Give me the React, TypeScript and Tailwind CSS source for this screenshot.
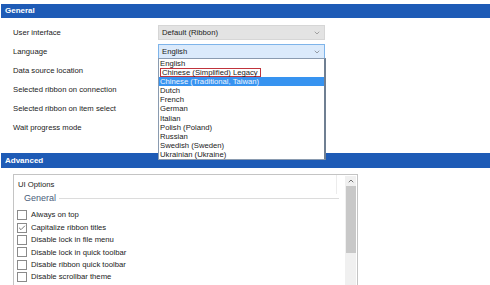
import { ChevronDown, ChevronUp, Check } from "lucide-react";

const font = { fontFamily: '"Liberation Sans", Arial, sans-serif' };

export default function App() {
  const rows = [
    "User interface",
    "Language",
    "Data source location",
    "Selected ribbon on connection",
    "Selected ribbon on item select",
    "Wait progress mode",
  ];

  const languages = [
    "English",
    "Chinese (Simplified) Legacy",
    "Chinese (Traditional, Taiwan)",
    "Dutch",
    "French",
    "German",
    "Italian",
    "Polish (Poland)",
    "Russian",
    "Swedish (Sweden)",
    "Ukrainian (Ukraine)",
  ];

  const options = [
    { label: "Always on top", checked: false },
    { label: "Capitalize ribbon titles", checked: true },
    { label: "Disable lock in file menu", checked: false },
    { label: "Disable lock in quick toolbar", checked: false },
    { label: "Disable ribbon quick toolbar", checked: false },
    { label: "Disable scrollbar theme", checked: false },
  ];

  return (
    <div className="relative w-[490px] h-[285px] overflow-hidden bg-white text-[7.7px] text-[#222]" style={font}>
      {/* General header */}
      <div className="mt-[4px] ml-[1px] h-[14px] bg-[#1e5bb6] pl-[4px] flex items-center text-white font-bold text-[8px]">
        General
      </div>

      {/* Settings rows */}
      <div className="mt-[5px] flex flex-col">
        {rows.map((label, i) => (
          <div key={label} className="h-[19px] flex items-center">
            <div className="w-[158px] pl-[13px]">{label}</div>
            {i === 0 && (
              <div className="w-[167px] h-[15px] bg-[#e3e3e3] border border-[#d6d6d6] flex items-center justify-between pl-[3px] pr-[3px]">
                <span>Default (Ribbon)</span>
                <ChevronDown size={8} strokeWidth={1.6} className="text-[#666]" />
              </div>
            )}
            {i === 1 && (
              <div className="w-[167px] h-[15px] bg-[#dbeafb] border border-[#7eb4ea] flex items-center justify-between pl-[3px] pr-[3px]">
                <span>English</span>
                <ChevronDown size={8} strokeWidth={1.6} className="text-[#555]" />
              </div>
            )}
          </div>
        ))}
      </div>

      {/* Advanced header */}
      <div className="mt-[16px] ml-[1px] h-[15px] bg-[#1e5bb6] pl-[4px] flex items-center text-white font-bold text-[8px]">
        Advanced
      </div>

      {/* UI options panel */}
      <div className="mt-[6px] ml-[13px] w-[345px] h-[130px] border border-[#c4c4c4] flex">
        <div className="flex-1 flex flex-col">
          <div className="h-[19px] flex items-center pl-[4px] border-r border-[#ececec] mr-[8px]">UI Options</div>
          <div className="flex items-center pl-[10px] pr-[6px] h-[9px]">
            <span className="text-[9px] text-[#4a5d7a]">General</span>
            <div className="flex-1 h-px bg-[#dcdcdc] ml-[3px]" />
          </div>
          <div className="mt-[6px] flex flex-col">
            {options.map((o) => (
              <div key={o.label} className="h-[12.4px] flex items-center pl-[3px]">
                <div className="w-[10px] h-[10px] border border-[#8a8a8a] bg-white flex items-center justify-center">
                  {o.checked && <Check size={8} strokeWidth={2} className="text-[#333]" />}
                </div>
                <span className="ml-[4px]">{o.label}</span>
              </div>
            ))}
            <div className="h-[12.4px] flex items-center pl-[3px]">
              <div className="w-[10px] h-[10px] border border-[#8a8a8a] bg-white" />
            </div>
          </div>
        </div>
        {/* Scrollbar */}
        <div className="w-[11px] mr-[1px] mt-[1px] bg-[#f0f0f0] flex flex-col items-center">
          <div className="h-[10px] flex items-center">
            <ChevronUp size={8} strokeWidth={2.4} className="text-[#555]" />
          </div>
          <div className="w-[10px] h-[67px] bg-[#c8c8c8]" />
        </div>
      </div>

      {/* Open language dropdown list */}
      <div className="absolute left-[158px] top-[58px] w-[168px] bg-white border border-[#8a9bb0] border-r-[2px] border-r-[#6f7f92] leading-[9.1px] whitespace-nowrap">
        {languages.map((lang, i) => (
          <div
            key={lang}
            className={i === 2 ? "h-[9.1px] pl-[1px] bg-[#3793f0] text-[#eef5ff]" : "h-[9.1px] pl-[1px]"}
          >
            {i === 1 ? (
              <span className="inline-block h-[9.1px] border border-[#c0343c] leading-[7px] pl-[1px] pr-[2px]">{lang}</span>
            ) : (
              lang
            )}
          </div>
        ))}
      </div>
    </div>
  );
}
